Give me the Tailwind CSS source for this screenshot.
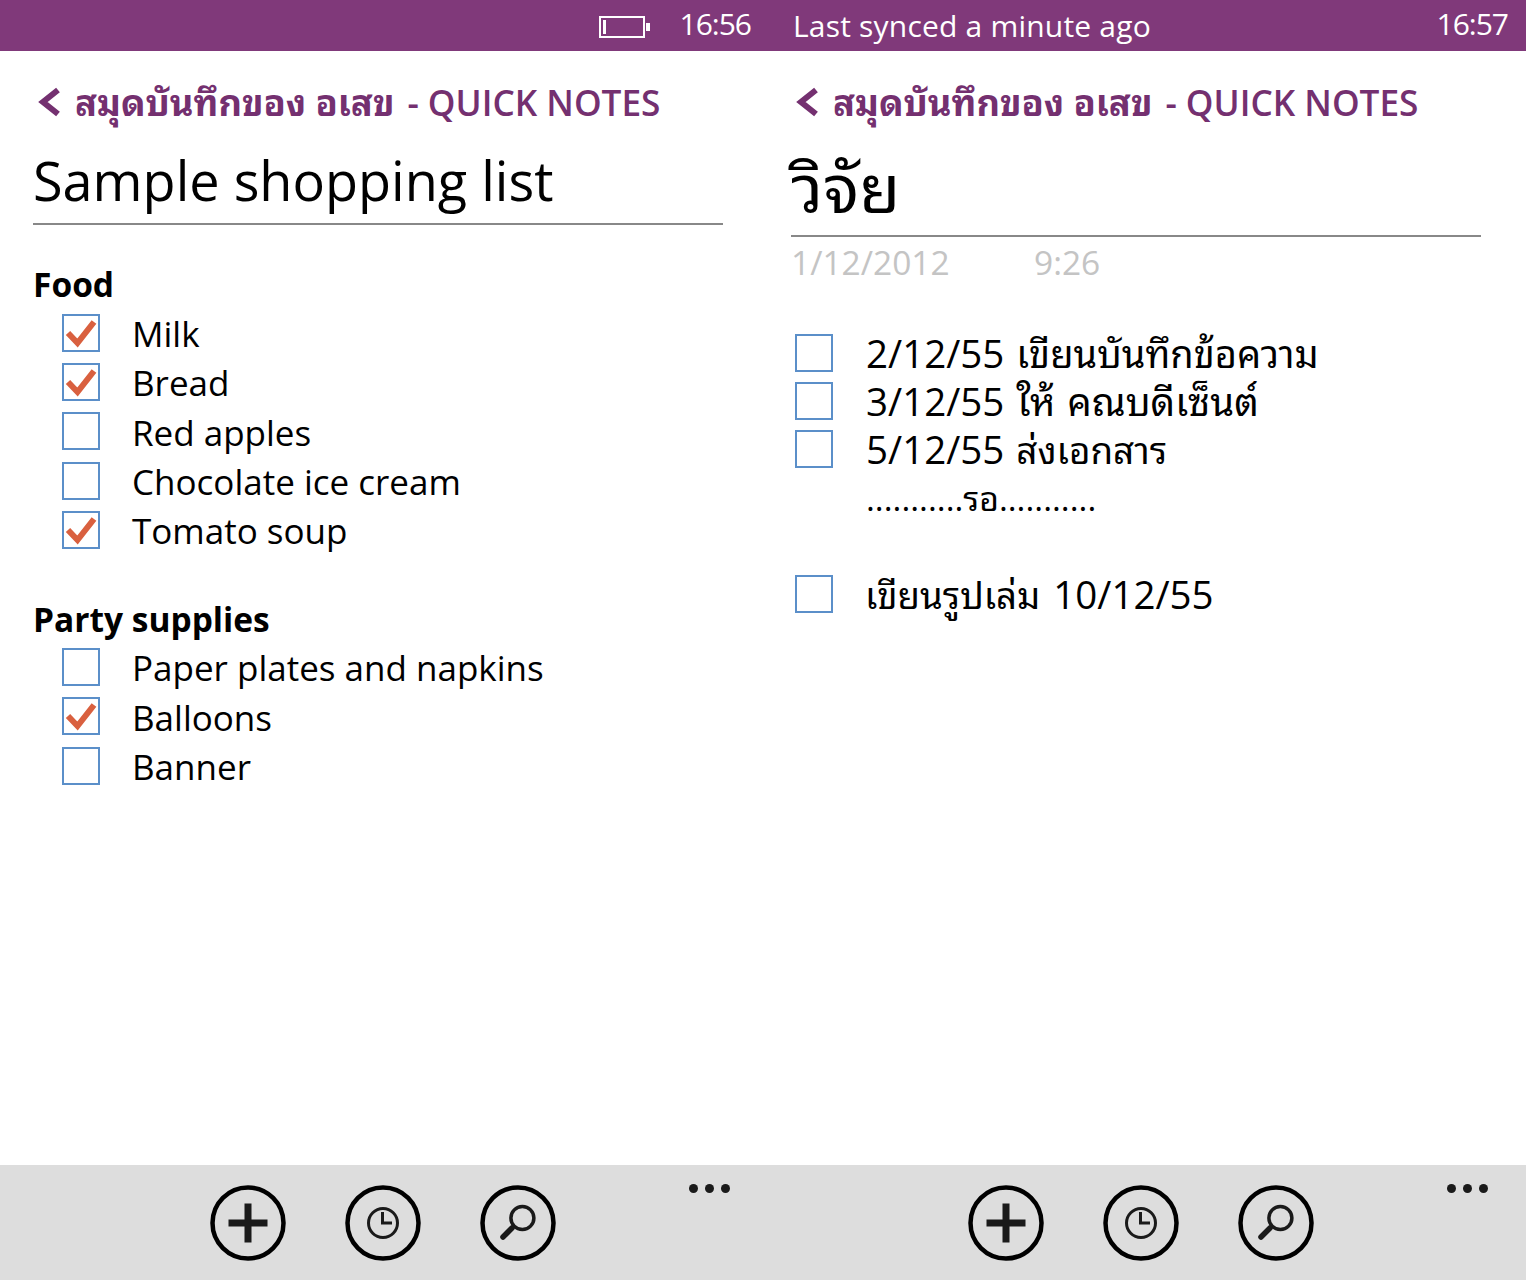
<!DOCTYPE html>
<html lang="en">
<head>
  <meta charset="UTF-8" />
  <title>Quick Notes</title>
  <script src="https://cdn.jsdelivr.net/npm/@tailwindcss/browser@4"></script>
</head>
<body class="bg-white text-black font-['Open_Sans','Noto_Sans_Thai_Looped','Garuda','Loma','Waree','Tlwg_Typo','Norasi','Noto_Sans',sans-serif]">
  <div class="flex w-[1526px] h-[1280px] overflow-hidden">

    <!-- LEFT PHONE -->
    <div class="w-[758px] h-full flex flex-col">
      <div class="h-[51px] bg-[#80397a] text-white flex items-center justify-end pr-[7px] shrink-0">
        <svg width="52" height="22" viewBox="0 0 52 22" class="mr-[29px] mt-[3px]">
          <rect x="1" y="1" width="44" height="20" fill="none" stroke="#fff" stroke-width="2"/>
          <rect x="4" y="4" width="3" height="14" fill="#fff"/>
          <rect x="47" y="7" width="4" height="8" fill="#fff"/>
        </svg>
        <span class="text-[30px] tracking-[-1px] mb-[4px]">16:56</span>
      </div>

      <div class="flex-1 pl-[33px] pr-[35px]">
        <div class="flex items-center h-[48px] mt-[27px] pl-[5px] text-[#743070] whitespace-nowrap">
          <svg width="22" height="30" viewBox="0 0 22 30" class="mr-[15px]">
            <path d="M20 3 L5 15 L20 27" fill="none" stroke="#743070" stroke-width="6"/>
          </svg>
          <span class="text-[36.3px] font-bold">สมุดบันทึกของ อเสข</span>
          <span class="text-[35.2px] font-semibold ml-[13px]">- QUICK NOTES</span>
        </div>
        <div class="h-[77px] mt-[20px] text-[54px] leading-[68px] border-b-2 border-[#888] box-content">Sample shopping list</div>

        <div class="mt-[35px] h-[49px] text-[33.5px] leading-[49px] font-bold">Food</div>
        <div class="flex items-center h-[49.3px] text-[35px]">
          <div class="w-[38px] h-[38px] ml-[29px] mr-[32px] mb-[2px] border-2 border-[#5b8fc9] flex items-center justify-center">
            <svg width="32" height="30" viewBox="0 0 32 30"><path d="M3 15 L12.5 25 L29 4" fill="none" stroke="#d9603f" stroke-width="6"/></svg>
          </div>
          <span class="mt-[1px]">Milk</span>
        </div>
        <div class="flex items-center h-[49.3px] text-[35px]">
          <div class="w-[38px] h-[38px] ml-[29px] mr-[32px] mb-[2px] border-2 border-[#5b8fc9] flex items-center justify-center">
            <svg width="32" height="30" viewBox="0 0 32 30"><path d="M3 15 L12.5 25 L29 4" fill="none" stroke="#d9603f" stroke-width="6"/></svg>
          </div>
          <span class="mt-[1px]">Bread</span>
        </div>
        <div class="flex items-center h-[49.3px] text-[35px]">
          <div class="w-[38px] h-[38px] ml-[29px] mr-[32px] mb-[2px] border-2 border-[#5b8fc9]"></div>
          <span class="mt-[1px]">Red apples</span>
        </div>
        <div class="flex items-center h-[49.3px] text-[35px]">
          <div class="w-[38px] h-[38px] ml-[29px] mr-[32px] mb-[2px] border-2 border-[#5b8fc9]"></div>
          <span class="mt-[1px]">Chocolate ice cream</span>
        </div>
        <div class="flex items-center h-[49.3px] text-[35px]">
          <div class="w-[38px] h-[38px] ml-[29px] mr-[32px] mb-[2px] border-2 border-[#5b8fc9] flex items-center justify-center">
            <svg width="32" height="30" viewBox="0 0 32 30"><path d="M3 15 L12.5 25 L29 4" fill="none" stroke="#d9603f" stroke-width="6"/></svg>
          </div>
          <span class="mt-[1px]">Tomato soup</span>
        </div>

        <div class="mt-[39px] h-[49px] text-[33.5px] leading-[51px] font-bold">Party supplies</div>
        <div class="flex items-center h-[49.3px] text-[35px]">
          <div class="w-[38px] h-[38px] ml-[29px] mr-[32px] mb-[2px] border-2 border-[#5b8fc9]"></div>
          <span class="mt-[1px]">Paper plates and napkins</span>
        </div>
        <div class="flex items-center h-[49.3px] text-[35px]">
          <div class="w-[38px] h-[38px] ml-[29px] mr-[32px] mb-[2px] border-2 border-[#5b8fc9] flex items-center justify-center">
            <svg width="32" height="30" viewBox="0 0 32 30"><path d="M3 15 L12.5 25 L29 4" fill="none" stroke="#d9603f" stroke-width="6"/></svg>
          </div>
          <span class="mt-[1px]">Balloons</span>
        </div>
        <div class="flex items-center h-[49.3px] text-[35px]">
          <div class="w-[38px] h-[38px] ml-[29px] mr-[32px] mb-[2px] border-2 border-[#5b8fc9]"></div>
          <span class="mt-[1px]">Banner</span>
        </div>
      </div>

      <div class="h-[115px] bg-[#dddddd] shrink-0 relative flex items-start pt-[20px] pl-[210px] gap-[59px]">
        <svg width="76" height="76" viewBox="0 0 76 76"><circle cx="38" cy="38" r="35.5" fill="none" stroke="#000" stroke-width="4.5"/><path d="M38 18.5V57.5M18.5 38H57.5" stroke="#1a1a1a" stroke-width="7" fill="none"/></svg>
        <svg width="76" height="76" viewBox="0 0 76 76"><circle cx="38" cy="38" r="35.5" fill="none" stroke="#000" stroke-width="4.5"/><circle cx="38" cy="38" r="14.5" fill="none" stroke="#1a1a1a" stroke-width="3"/><path d="M37.5 27V38H47" fill="none" stroke="#1a1a1a" stroke-width="3"/></svg>
        <svg width="76" height="76" viewBox="0 0 76 76"><circle cx="38" cy="38" r="35.5" fill="none" stroke="#000" stroke-width="4.5"/><circle cx="42.4" cy="33" r="11.5" fill="none" stroke="#1a1a1a" stroke-width="3.5"/><path d="M32 43L23 52" fill="none" stroke="#1a1a1a" stroke-width="5.5" stroke-linecap="round"/></svg>
        <div class="absolute left-[689px] top-[19px] flex gap-[7px]">
          <div class="w-[9px] h-[9px] rounded-full bg-[#1a1a1a]"></div>
          <div class="w-[9px] h-[9px] rounded-full bg-[#1a1a1a]"></div>
          <div class="w-[9px] h-[9px] rounded-full bg-[#1a1a1a]"></div>
        </div>
      </div>
    </div>

    <!-- RIGHT PHONE -->
    <div class="w-[768px] h-full flex flex-col">
      <div class="h-[51px] bg-[#80397a] text-white flex items-center justify-between pl-[35px] pr-[18px] shrink-0">
        <span class="text-[30px] tracking-[0.2px] mb-[1px]">Last synced a minute ago</span>
        <span class="text-[30px] tracking-[-1px] mb-[4px]">16:57</span>
      </div>

      <div class="flex-1 pl-[33px] pr-[45px]">
        <div class="flex items-center h-[48px] mt-[27px] pl-[5px] text-[#743070] whitespace-nowrap">
          <svg width="22" height="30" viewBox="0 0 22 30" class="mr-[15px]">
            <path d="M20 3 L5 15 L20 27" fill="none" stroke="#743070" stroke-width="6"/>
          </svg>
          <span class="text-[36.3px] font-bold">สมุดบันทึกของ อเสข</span>
          <span class="text-[35.2px] font-semibold ml-[13px]">- QUICK NOTES</span>
        </div>
        <div class="h-[88px] mt-[21px] text-[67px] leading-[80px] border-b-2 border-[#888] box-content">วิจัย</div>
        <div class="flex h-[50px] items-center text-[33.5px] text-[#c4c4c4]">
          <span class="w-[243px]">1/12/2012</span>
          <span>9:26</span>
        </div>

        <div class="mt-[42px] flex items-center h-[48px] text-[38.5px] [word-spacing:2px]">
          <div class="w-[38px] h-[38px] ml-[4px] mr-[33px] border-2 border-[#5b8fc9]"></div>
          <span class="mt-[1px]">2/12/55 <span class="text-[38px]">เขียนบันทึกข้อความ</span></span>
        </div>
        <div class="flex items-center h-[48px] text-[38.5px] [word-spacing:2px]">
          <div class="w-[38px] h-[38px] ml-[4px] mr-[33px] border-2 border-[#5b8fc9]"></div>
          <span class="mt-[1px]">3/12/55 ให้ คณบดีเซ็นต์</span>
        </div>
        <div class="flex items-center h-[48px] text-[38.5px] [word-spacing:2px]">
          <div class="w-[38px] h-[38px] ml-[4px] mr-[33px] border-2 border-[#5b8fc9]"></div>
          <span class="mt-[2px]">5/12/55 <span class="text-[36.8px]">ส่งเอกสาร</span></span>
        </div>
        <div class="h-[48px] pl-[75px] text-[33.7px] leading-[50px]">...........รอ...........</div>
        <div class="mt-[49px] flex items-center h-[48px] text-[38.5px] [word-spacing:3px]">
          <div class="w-[38px] h-[38px] ml-[4px] mr-[32px] border-2 border-[#5b8fc9]"></div>
          <span class="mt-[1px]"><span class="text-[36.6px]">เขียนรูปเล่ม</span> 10/12/55</span>
        </div>
      </div>

      <div class="h-[115px] bg-[#dddddd] shrink-0 relative flex items-start pt-[20px] pl-[210px] gap-[59px]">
        <svg width="76" height="76" viewBox="0 0 76 76"><circle cx="38" cy="38" r="35.5" fill="none" stroke="#000" stroke-width="4.5"/><path d="M38 18.5V57.5M18.5 38H57.5" stroke="#1a1a1a" stroke-width="7" fill="none"/></svg>
        <svg width="76" height="76" viewBox="0 0 76 76"><circle cx="38" cy="38" r="35.5" fill="none" stroke="#000" stroke-width="4.5"/><circle cx="38" cy="38" r="14.5" fill="none" stroke="#1a1a1a" stroke-width="3"/><path d="M37.5 27V38H47" fill="none" stroke="#1a1a1a" stroke-width="3"/></svg>
        <svg width="76" height="76" viewBox="0 0 76 76"><circle cx="38" cy="38" r="35.5" fill="none" stroke="#000" stroke-width="4.5"/><circle cx="42.4" cy="33" r="11.5" fill="none" stroke="#1a1a1a" stroke-width="3.5"/><path d="M32 43L23 52" fill="none" stroke="#1a1a1a" stroke-width="5.5" stroke-linecap="round"/></svg>
        <div class="absolute left-[689px] top-[19px] flex gap-[7px]">
          <div class="w-[9px] h-[9px] rounded-full bg-[#1a1a1a]"></div>
          <div class="w-[9px] h-[9px] rounded-full bg-[#1a1a1a]"></div>
          <div class="w-[9px] h-[9px] rounded-full bg-[#1a1a1a]"></div>
        </div>
      </div>
    </div>
  </div>
</body>
</html>
